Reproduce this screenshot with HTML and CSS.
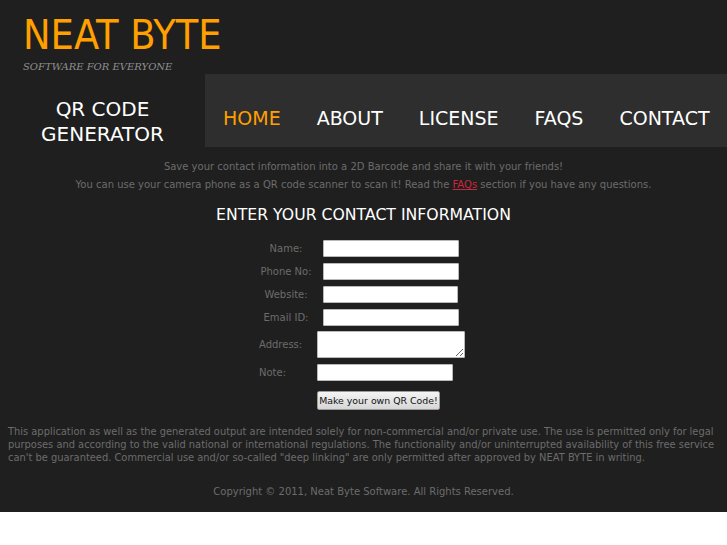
FILE: index.html
```html
<!DOCTYPE html>
<html lang="en">
<head>
    <meta charset="UTF-8">
    <title>QR Code Generator - Neat Byte</title>
    <link rel="stylesheet" href="styles.css">
</head>
<body>

<div class="page">
    <!-- Logo -->
    <header class="masthead">
        <div class="logo">NEAT BYTE</div>
        <div class="tagline">SOFTWARE FOR EVERYONE</div>
    </header>

    <!-- Title + menu -->
    <div class="bar">
        <div class="app-title">QR CODE<br>GENERATOR</div>
        <ul class="nav">
            <li class="active"><a href="#">HOME</a></li>
            <li><a href="#">ABOUT</a></li>
            <li><a href="#">LICENSE</a></li>
            <li><a href="#">FAQS</a></li>
            <li><a href="#">CONTACT</a></li>
        </ul>
    </div>

    <div class="intro">
        <p>Save your contact information into a 2D Barcode and share it with your friends!</p>
        <p>You can use your camera phone as a QR code scanner to scan it! Read the <a href="#">FAQs</a> section if you have any questions.</p>
    </div>

    <h2 class="form-title">ENTER YOUR CONTACT INFORMATION</h2>

    <form class="contact-form">
        <div class="row">
            <label class="lbl">Name:</label>
            <input type="text" class="field">
        </div>
        <div class="row">
            <label class="lbl">Phone No:</label>
            <input type="text" class="field">
        </div>
        <div class="row">
            <label class="lbl">Website:</label>
            <input type="text" class="field narrow">
        </div>
        <div class="row">
            <label class="lbl">Email ID:</label>
            <input type="text" class="field">
        </div>
        <div class="row row-alt row-address">
            <label class="lbl">Address:</label>
            <textarea class="field area"></textarea>
        </div>
        <div class="row row-alt">
            <label class="lbl">Note:</label>
            <input type="text" class="field">
        </div>
        <div class="row row-alt row-submit">
            <span class="lbl"></span>
            <button type="button" class="make-btn">Make your own QR Code!</button>
        </div>
    </form>

    <p class="disclaimer">This application as well as the generated output are intended solely for non-commercial and/or private use. The use is permitted only for legal purposes and according to the valid national or international regulations. The functionality and/or uninterrupted availability of this free service can't be guaranteed. Commercial use and/or so-called "deep linking" are only permitted after approved by NEAT BYTE in writing.</p>

    <p class="copyright">Copyright &copy; 2011, Neat Byte Software. All Rights Reserved.</p>
</div>

</body>
</html>
```

FILE: styles.css
```css
/* Base */
html {
    background: #fff;
}

body {
    margin: 0;
    padding: 0;
    font-family: 'DejaVu Sans', Verdana, sans-serif;
    color: #6c6c6c;
}

a {
    color: inherit;
    text-decoration: none;
}

p {
    margin: 0;
}

.page {
    background: #1f1f1f;
    padding-bottom: 14px;
}

/* Logo */
.masthead {
    height: 74px;
    box-sizing: border-box;
    padding: 15px 0 0 23px;
}

.logo {
    font-size: 41px;
    line-height: 41px;
    color: #ffa000;
    font-stretch: condensed;
}

.tagline {
    margin-top: 6px;
    font-family: 'DejaVu Serif', Georgia, serif;
    font-style: italic;
    font-size: 10px;
    line-height: 10px;
    color: #8f8f8f;
}

/* Title + menu bar */
.bar {
    display: flex;
    height: 73px;
}

.app-title {
    width: 205px;
    flex-shrink: 0;
    box-sizing: border-box;
    padding-top: 23px;
    text-align: center;
    font-size: 20px;
    line-height: 25px;
    color: #fff;
}

.nav {
    flex: 1;
    display: flex;
    margin: 0;
    padding: 35px 0 0 0;
    list-style: none;
    background: #2e2e2e;
}

.nav li {
    padding: 0 18px;
    font-size: 19px;
    line-height: 19px;
    color: #fff;
}

.nav li.active {
    color: #ffa000;
}

/* Intro */
.intro {
    margin-top: 11px;
    text-align: center;
    font-size: 10px;
    line-height: 18px;
}

.intro a {
    color: #c8283c;
    text-decoration: underline;
}

.form-title {
    margin: 11px 0 0 0;
    text-align: center;
    font-size: 15.7px;
    line-height: 20px;
    font-weight: normal;
    color: #fff;
}

/* Form */
.contact-form {
    width: 209px;
    margin: 15px auto 0 auto;
}

.row {
    display: flex;
    align-items: center;
    margin-bottom: 6px;
    font-size: 10px;
}

.lbl {
    width: 54px;
    margin-right: 10px;
    text-align: center;
}

.row-alt .lbl {
    width: 48px;
    text-align: left;
}

.field {
    width: 136px;
    height: 17px;
    box-sizing: border-box;
    padding: 0 2px;
    border: 1px solid #b9b9b9;
    border-radius: 1px;
    background: #fff;
    font-family: inherit;
    font-size: 10px;
}

.field.narrow {
    width: 135px;
}

.row-address {
    margin-top: -1px;
}

.field.area {
    width: 148px;
    height: 27px;
    resize: both;
}

.row-submit {
    margin-top: 10px;
}

.make-btn {
    width: 123px;
    height: 19px;
    padding: 0;
    border: 1px solid #9a9a9a;
    border-radius: 2px;
    background: linear-gradient(#f4f4f4, #d6d6d6);
    font-family: inherit;
    font-size: 9.4px;
    white-space: nowrap;
    color: #111;
}

/* Footer texts */
.disclaimer {
    margin: 15px 6px 0 8px;
    font-size: 9.9px;
    line-height: 13px;
}

.copyright {
    margin-top: 21px;
    text-align: center;
    font-size: 10px;
    line-height: 13px;
}
```
